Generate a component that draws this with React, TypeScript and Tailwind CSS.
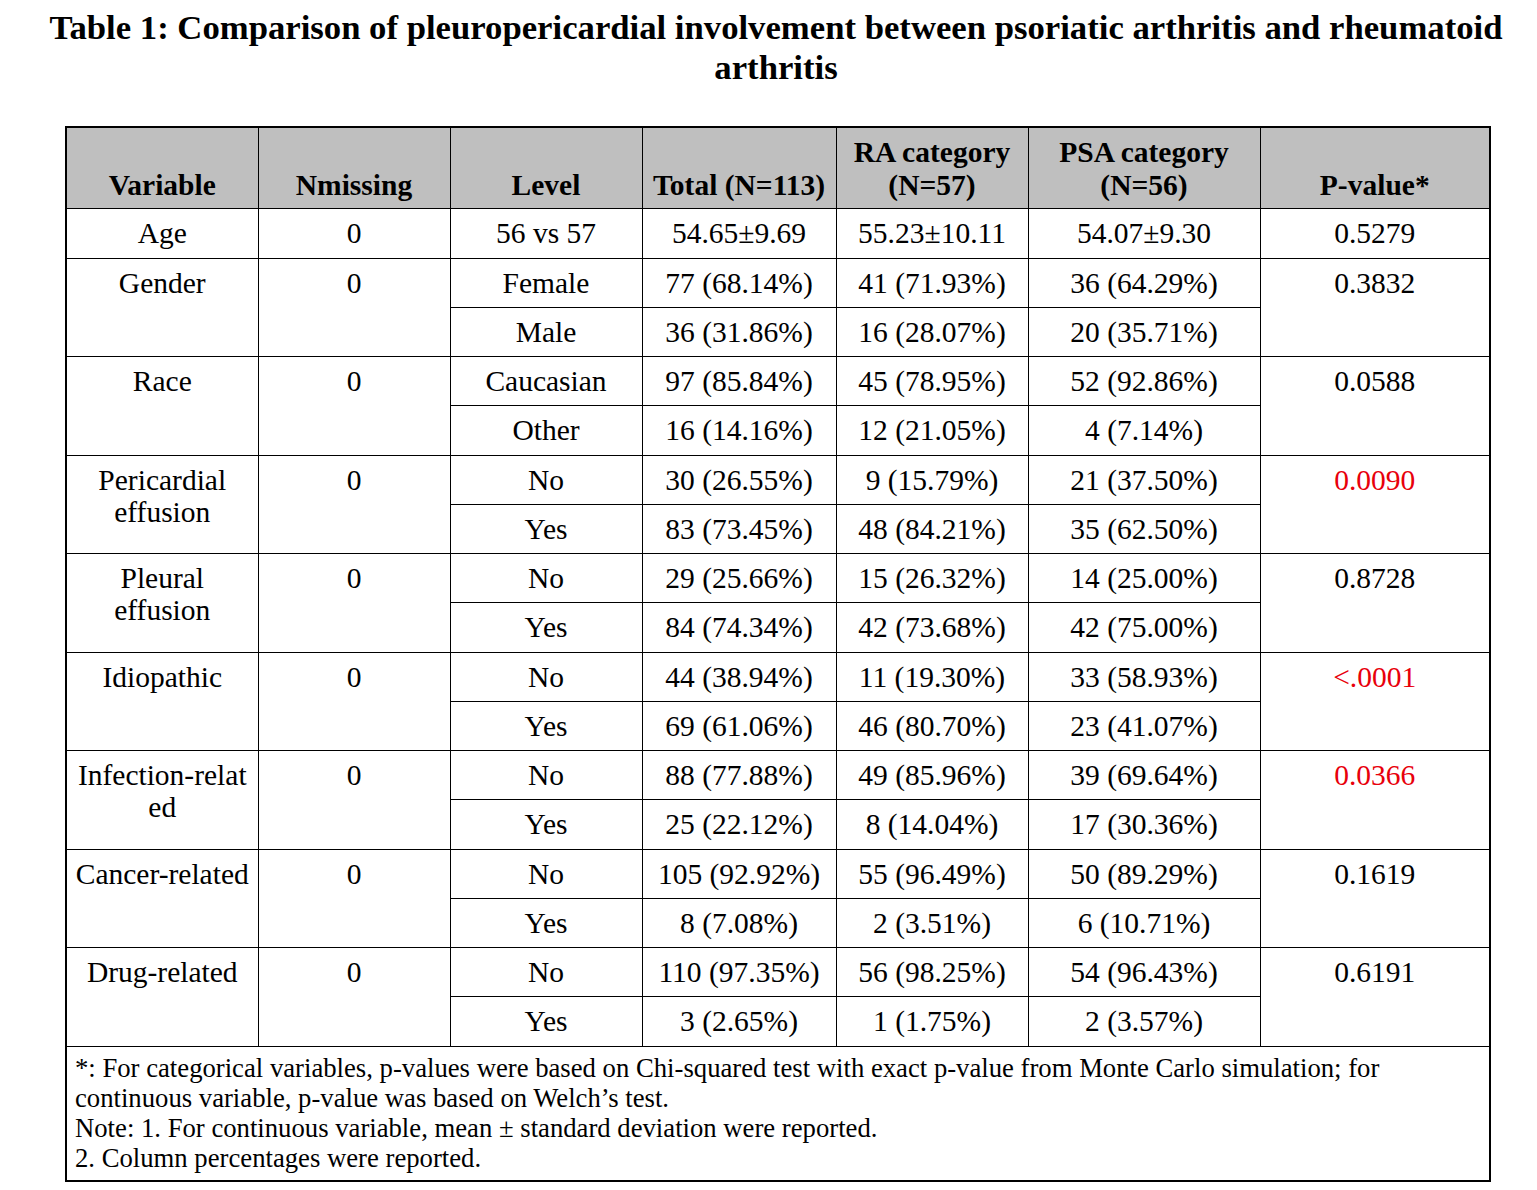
type Group = {
  variable: React.ReactNode;
  nmissing: string;
  pvalue: string;
  red?: boolean;
  rows: [string, string, string, string][];
};

const groups: Group[] = [
  {
    variable: "Age",
    nmissing: "0",
    pvalue: "0.5279",
    rows: [["56 vs 57", "54.65±9.69", "55.23±10.11", "54.07±9.30"]],
  },
  {
    variable: "Gender",
    nmissing: "0",
    pvalue: "0.3832",
    rows: [
      ["Female", "77 (68.14%)", "41 (71.93%)", "36 (64.29%)"],
      ["Male", "36 (31.86%)", "16 (28.07%)", "20 (35.71%)"],
    ],
  },
  {
    variable: "Race",
    nmissing: "0",
    pvalue: "0.0588",
    rows: [
      ["Caucasian", "97 (85.84%)", "45 (78.95%)", "52 (92.86%)"],
      ["Other", "16 (14.16%)", "12 (21.05%)", "4 (7.14%)"],
    ],
  },
  {
    variable: (
      <>
        Pericardial
        <br />
        effusion
      </>
    ),
    nmissing: "0",
    pvalue: "0.0090",
    red: true,
    rows: [
      ["No", "30 (26.55%)", "9 (15.79%)", "21 (37.50%)"],
      ["Yes", "83 (73.45%)", "48 (84.21%)", "35 (62.50%)"],
    ],
  },
  {
    variable: (
      <>
        Pleural
        <br />
        effusion
      </>
    ),
    nmissing: "0",
    pvalue: "0.8728",
    rows: [
      ["No", "29 (25.66%)", "15 (26.32%)", "14 (25.00%)"],
      ["Yes", "84 (74.34%)", "42 (73.68%)", "42 (75.00%)"],
    ],
  },
  {
    variable: "Idiopathic",
    nmissing: "0",
    pvalue: "<.0001",
    red: true,
    rows: [
      ["No", "44 (38.94%)", "11 (19.30%)", "33 (58.93%)"],
      ["Yes", "69 (61.06%)", "46 (80.70%)", "23 (41.07%)"],
    ],
  },
  {
    variable: (
      <>
        Infection-relat
        <br />
        ed
      </>
    ),
    nmissing: "0",
    pvalue: "0.0366",
    red: true,
    rows: [
      ["No", "88 (77.88%)", "49 (85.96%)", "39 (69.64%)"],
      ["Yes", "25 (22.12%)", "8 (14.04%)", "17 (30.36%)"],
    ],
  },
  {
    variable: "Cancer-related",
    nmissing: "0",
    pvalue: "0.1619",
    rows: [
      ["No", "105 (92.92%)", "55 (96.49%)", "50 (89.29%)"],
      ["Yes", "8 (7.08%)", "2 (3.51%)", "6 (10.71%)"],
    ],
  },
  {
    variable: "Drug-related",
    nmissing: "0",
    pvalue: "0.6191",
    rows: [
      ["No", "110 (97.35%)", "56 (98.25%)", "54 (96.43%)"],
      ["Yes", "3 (2.65%)", "1 (1.75%)", "2 (3.57%)"],
    ],
  },
];

const cell =
  "border border-black px-1 pt-[8px] pb-[8px] text-center align-top leading-[32px] whitespace-nowrap";
const head =
  "border border-black bg-[#bfbfbf] px-1 pb-[6px] text-center align-bottom font-bold leading-[33px] whitespace-nowrap";

export default function App() {
  return (
    <div
      className="min-h-[1190px] w-[1537px] bg-white text-black"
      style={{ fontFamily: '"Liberation Serif", "Times New Roman", serif' }}
    >
      <h1 className="pl-[15px] pt-[8px] text-center text-[34.7px] font-bold leading-[40px]">
        Table 1: Comparison of pleuropericardial involvement between psoriatic arthritis and rheumatoid arthritis
      </h1>

      <div className="pl-[65px] pt-[38px]">
        <table className="w-[1424px] table-fixed border-collapse border-2 border-black text-[29.5px]">
          <colgroup>
            <col className="w-[192px]" />
            <col className="w-[192px]" />
            <col className="w-[192px]" />
            <col className="w-[194px]" />
            <col className="w-[192px]" />
            <col className="w-[232px]" />
            <col className="w-[230px]" />
          </colgroup>
          <thead>
            <tr className="h-[81px]">
              <th className={head}>Variable</th>
              <th className={head}>Nmissing</th>
              <th className={head}>Level</th>
              <th className={head}>Total (N=113)</th>
              <th className={head}>
                RA category
                <br />
                (N=57)
              </th>
              <th className={head}>
                PSA category
                <br />
                (N=56)
              </th>
              <th className={head}>P-value*</th>
            </tr>
          </thead>
          <tbody>
            {groups.map((g, gi) =>
              g.rows.map((r, ri) => (
                <tr
                  key={`${gi}-${ri}`}
                  className={gi === 0 ? "h-[50px]" : "h-[49.25px]"}
                >
                  {ri === 0 && (
                    <>
                      <td rowSpan={g.rows.length} className={cell}>
                        {g.variable}
                      </td>
                      <td rowSpan={g.rows.length} className={cell}>
                        {g.nmissing}
                      </td>
                    </>
                  )}
                  <td className={cell}>{r[0]}</td>
                  <td className={cell}>{r[1]}</td>
                  <td className={cell}>{r[2]}</td>
                  <td className={cell}>{r[3]}</td>
                  {ri === 0 && (
                    <td
                      rowSpan={g.rows.length}
                      className={`${cell} ${g.red ? "text-[#e8000b]" : ""}`}
                    >
                      {g.pvalue}
                    </td>
                  )}
                </tr>
              ))
            )}
            <tr>
              <td
                colSpan={7}
                className="border border-black px-[8px] pt-[6px] pb-[7px] text-left align-top text-[26.7px] leading-[30px]"
              >
                *: For categorical variables, p-values were based on Chi-squared test with exact p-value from Monte Carlo simulation; for
                <br />
                continuous variable, p-value was based on Welch’s test.
                <br />
                Note: 1. For continuous variable, mean ± standard deviation were reported.
                <br />
                2. Column percentages were reported.
              </td>
            </tr>
          </tbody>
        </table>
      </div>
    </div>
  );
}
